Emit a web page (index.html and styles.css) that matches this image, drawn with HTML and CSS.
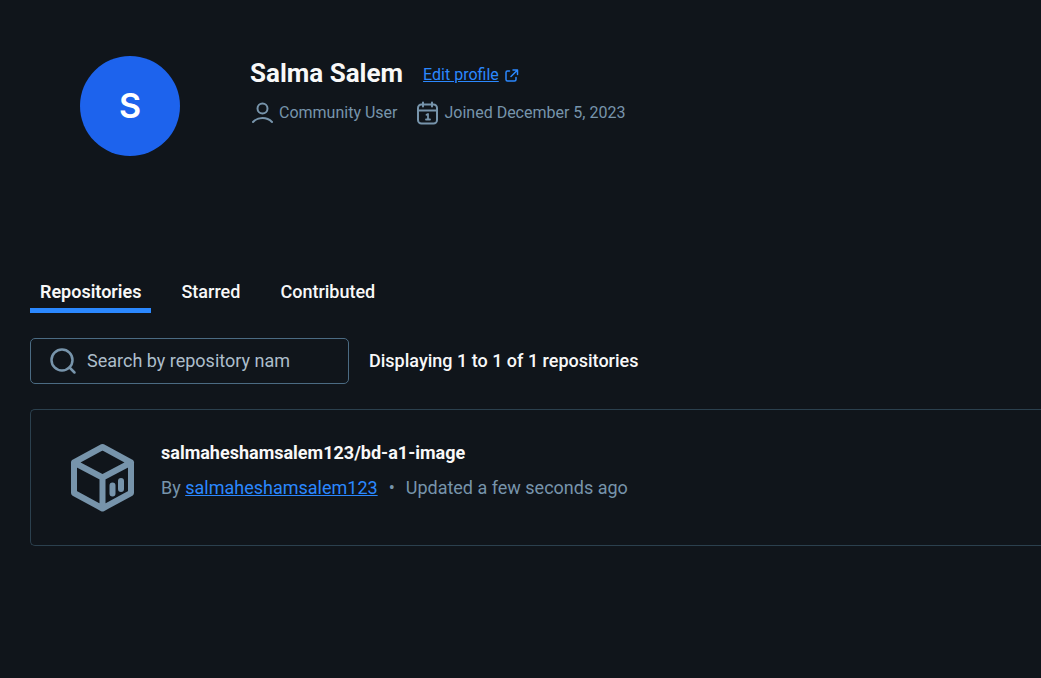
FILE: index.html
```html
<!DOCTYPE html>
<html lang="en">
<head>
<meta charset="utf-8">
<title>Salma Salem</title>
<link rel="stylesheet" href="styles.css">
</head>
<body>
<header class="profile">
  <div class="avatar">S</div>
  <div class="profile-info">
    <div class="profile-heading">
      <h1 class="profile-name">Salma Salem</h1>
      <a class="link edit-link" href="#"><span class="link-text">Edit profile</span>
        <svg class="external-icon" viewBox="0 0 15 15" aria-hidden="true"><path d="M5.500 3H3.500a1.500 1.500 0 0 0-1.500 1.500v7A1.500 1.500 0 0 0 3.500 13h7a1.500 1.500 0 0 0 1.500-1.500V9.500M9 2h4.500v4.500M13 2.500L7 8.500"/></svg></a>
    </div>
    <ul class="profile-meta">
      <li class="meta-item">
        <svg class="meta-icon" viewBox="0 0 25 25" aria-hidden="true"><circle cx="12.500" cy="8.500" r="5"/><path d="M3 22c5.200-5.200 13.800-5.200 19 0"/></svg>
        <span>Community User</span>
      </li>
      <li class="meta-item">
        <svg class="meta-icon" viewBox="0 0 25 25" aria-hidden="true"><rect x="3" y="4.500" width="19" height="19" rx="3.500"/><path d="M3 10.500h19M8 2.500v4M17 2.500v4"/><path class="day" d="M11.500 14.800l1.500-.8V19.500M11 19.500h4"/></svg>
        <span>Joined December 5, 2023</span>
      </li>
    </ul>
  </div>
</header>
<main class="content">
  <nav class="tabs" role="tablist">
    <button class="tab tab-active" role="tab" aria-selected="true">Repositories</button>
    <button class="tab" role="tab" aria-selected="false">Starred</button>
    <button class="tab" role="tab" aria-selected="false">Contributed</button>
  </nav>
  <div class="toolbar">
    <label class="search">
      <svg class="search-icon" viewBox="0 0 30 30" aria-hidden="true"><circle cx="14" cy="14" r="10.500"/><path d="M21.500 21.500l5 5"/></svg>
      <input class="search-input" type="text" placeholder="Search by repository nam" aria-label="Search repositories">
    </label>
    <p class="count">Displaying 1 to 1 of 1 repositories</p>
  </div>
  <article class="card">
    <svg class="cube-icon" viewBox="0 0 64 70" aria-hidden="true"><path d="M31.500 4L60 19.500V50L31.500 65.500L3 50V19.500ZM3 19.500L31.500 34.500L60 19.500M31.500 34.500V65.500"/><path d="M41.500 42.500V50.500M50 38V46"/></svg>
    <div class="card-body">
      <h2 class="repo-name">salmaheshamsalem123/bd-a1-image</h2>
      <p class="repo-meta">By <a class="link" href="#">salmaheshamsalem123</a><span class="dot">•</span>Updated a few seconds ago</p>
    </div>
  </article>
</main>
</body>
</html>
```
FILE: styles.css
```css
* {
  box-sizing: border-box;
}

body {
  margin: 0;
  background: #10151b;
  color: #f8f8f8;
  font: 400 18px/24px Roboto, sans-serif;
}

h1, h2, p, ul {
  margin: 0;
  padding: 0;
}

svg {
  flex: none;
  fill: none;
  stroke: #7794ab;
  stroke-width: 2;
  stroke-linecap: round;
  stroke-linejoin: round;
}

.link {
  color: #2b88ff;
  text-decoration: underline;
}

.profile {
  display: flex;
  gap: 70px;
  padding: 56px 80px 0;
}

.avatar {
  display: flex;
  flex: none;
  align-items: center;
  justify-content: center;
  width: 100px;
  height: 100px;
  border-radius: 50%;
  background: #1d63ed;
  color: #fff;
  font: 600 34px/40px Inter, sans-serif;
}

.profile-heading {
  display: flex;
  align-items: center;
  gap: 20px;
}

.profile-name {
  font-size: 26px;
  font-weight: 700;
  line-height: 34px;
}

.edit-link {
  display: flex;
  align-items: center;
  gap: 5px;
  padding-top: 4px;
  font-size: 16px;
  text-decoration: none;
}

.link-text {
  text-decoration: underline;
}

.external-icon {
  width: 15px;
  height: 15px;
  stroke: #2b88ff;
  stroke-width: 1.500;
}

.profile-meta {
  display: flex;
  gap: 18px;
  padding-top: 10px;
  list-style: none;
  color: #7794ab;
  font-size: 16px;
}

.meta-item {
  display: flex;
  align-items: center;
  gap: 4px;
}

.meta-icon {
  width: 25px;
  height: 25px;
}

.day {
  stroke-width: 1.800;
}

.content {
  padding: 114px 0 0 30px;
}

.tabs {
  display: flex;
  gap: 20px;
}

.tab {
  padding: 10px 10px 4px;
  border: 0;
  border-bottom: 5px solid transparent;
  background: none;
  color: inherit;
  font: 500 18px/24px Roboto, sans-serif;
}

.tab-active {
  border-color: #2b88ff;
  font-weight: 600;
}

.toolbar {
  display: flex;
  align-items: center;
  gap: 20px;
  padding: 25px 0;
}

.search {
  display: flex;
  align-items: center;
  gap: 9px;
  width: 319px;
  height: 46px;
  padding: 0 17px;
  border: 1px solid #4b6b83;
  border-radius: 5px;
}

.search-icon {
  width: 30px;
  height: 30px;
  stroke-width: 2.500;
}

.search-input {
  flex: 1;
  min-width: 0;
  padding: 0;
  border: 0;
  outline: 0;
  background: none;
  color: inherit;
  font: inherit;
}

.search-input::placeholder {
  color: #adbecb;
  opacity: 1;
}

.count {
  font-weight: 500;
}

.card {
  display: flex;
  align-items: flex-start;
  gap: 26px;
  padding: 31px 40px 32px;
  border: 1px solid #2b404e;
  border-right: 0;
  border-radius: 5px 0 0 5px;
}

.cube-icon {
  width: 64px;
  height: 70px;
  margin-top: 2px;
  stroke-width: 6;
}

.repo-name {
  font-size: 18px;
  font-weight: 700;
}

.repo-meta {
  padding-top: 11px;
  color: #7794ab;
}

.dot {
  padding: 0 11px;
}
```
